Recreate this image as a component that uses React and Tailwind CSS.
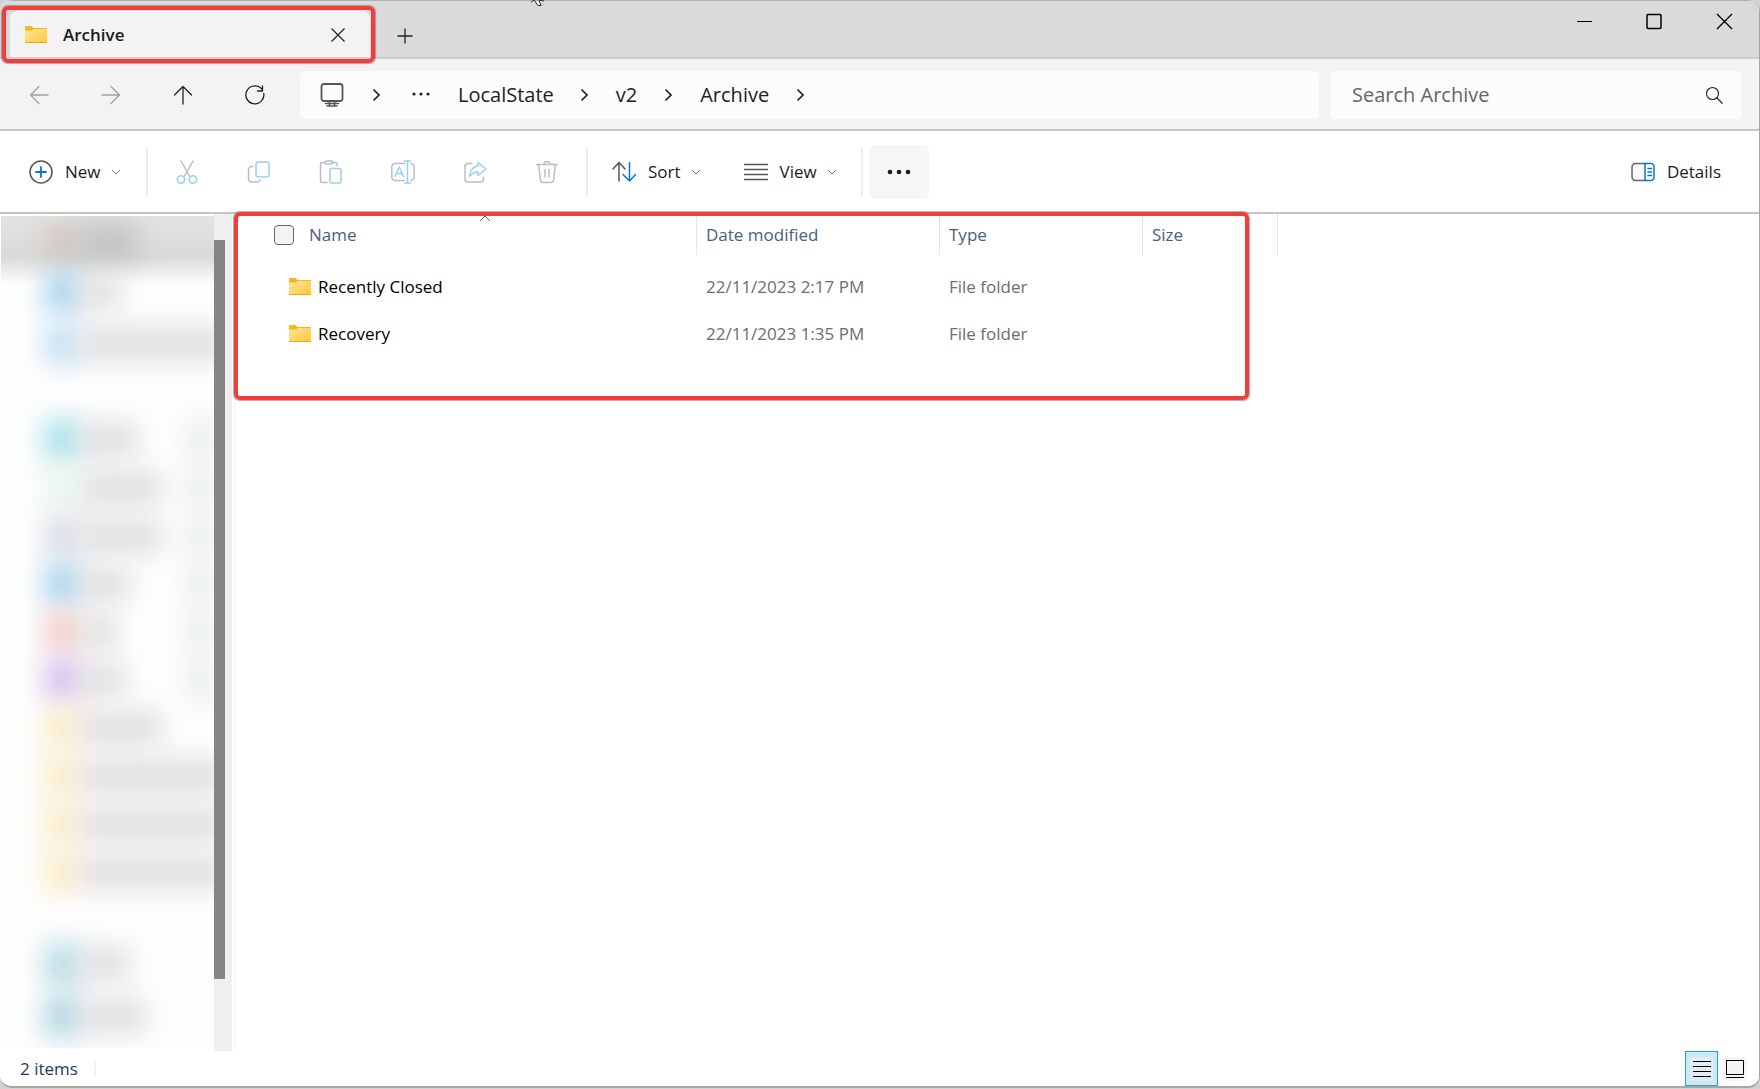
import React, { useState } from "react";

const Icon = ({ size = 24, className = "", children }) => (
  <svg
    width={size}
    height={size}
    viewBox="0 0 24 24"
    fill="none"
    stroke="currentColor"
    strokeWidth="1.5"
    strokeLinecap="round"
    strokeLinejoin="round"
    className={"shrink-0 " + className}
    aria-hidden="true"
  >
    {children}
  </svg>
);

const Folder = () => (
  <svg width="24" height="18" viewBox="0 0 24 18" className="shrink-0" aria-hidden="true">
    <defs>
      <linearGradient id="folder" x1="0" y1="0" x2="1" y2="1">
        <stop offset="0" stopColor="#ffe69c" />
        <stop offset="1" stopColor="#ffc736" />
      </linearGradient>
    </defs>
    <path d="M1 1.500C1 .7 1.400 0 2 0h5.500l2 2H23v5H1z" fill="#f5b81c" />
    <path d="M1 4.500h7L10 3h13v14H1z" fill="url(#folder)" />
    <path d="M1 16.500h22" stroke="#eba91c" />
  </svg>
);

const ChevronDown = () => (
  <svg width="10" height="6" viewBox="0 0 10 6" fill="none" stroke="#777" className="shrink-0" aria-hidden="true">
    <path d="M1 1l4 4 4-4" />
  </svg>
);

const ChevronRight = () => (
  <svg width="9" height="14" viewBox="0 0 9 14" fill="none" stroke="#222" strokeWidth="1.7" className="shrink-0" aria-hidden="true">
    <path d="M1.500 1.500L7 7l-5.500 5.500" />
  </svg>
);

const Divider = () => <div className="h-12 w-0.5 shrink-0 bg-[#ededed]" />;

const actions = [
  {
    name: "Cut",
    icon: (
      <>
        <path d="M6 1l9 16M18 1L9 17" stroke="#bdbdbd" />
        <circle cx="6" cy="19.500" r="3.700" stroke="#9dcdf0" />
        <circle cx="18" cy="19.500" r="3.700" stroke="#9dcdf0" />
      </>
    ),
  },
  {
    name: "Copy",
    icon: (
      <>
        <path d="M6 6.500H5A3.500 3.500 0 001.500 10v8.500A3.500 3.500 0 005 22h5a3.500 3.500 0 003.300-2.200" stroke="#bdbdbd" />
        <rect x="9" y="2" width="13" height="15" rx="2.500" stroke="#9dcdf0" />
      </>
    ),
  },
  {
    name: "Paste",
    icon: (
      <>
        <path d="M6 2.500H3A1.500 1.500 0 001.500 4v17A1.500 1.500 0 003 22.500h5M13 2.500h3.500A1.500 1.500 0 0118 4v2" stroke="#bdbdbd" />
        <rect x="6" y="1" width="8" height="3" rx="1.500" stroke="#bdbdbd" />
        <rect x="11" y="8.500" width="11" height="14.500" rx="1.500" stroke="#9dcdf0" />
      </>
    ),
  },
  {
    name: "Rename",
    icon: (
      <>
        <path d="M13.500 3.500H4A3.500 3.500 0 00.800 7v10A3.500 3.500 0 004 20.500h9.500M19.500 3.500A3.500 3.500 0 0123.200 7v10a3.500 3.500 0 01-3.700 3.500" stroke="#bdbdbd" />
        <path d="M13.500 1h6M13.500 23h6M16.500 1v22M4 16.500L8.200 7l4.200 9.500M5.500 13.500h5.500" stroke="#9dcdf0" />
      </>
    ),
  },
  {
    name: "Share",
    icon: (
      <>
        <path d="M9 3.500H5A3 3 0 002 6.500V19a3 3 0 003 3h12.500a3 3 0 003-3v-1.500" stroke="#bdbdbd" />
        <path d="M15 2.500l8 6.500-8 6.500V12c-4 0-6.500 1.500-8.500 4.500C7 10.500 10 6.500 15 6z" stroke="#9dcdf0" />
      </>
    ),
  },
  {
    name: "Delete",
    icon: (
      <g stroke="#bdbdbd">
        <path d="M1.500 4.500h21M9 4.500a3 3 0 016 0M3.500 4.500l2 16a2.500 2.500 0 002.500 2h8a2.500 2.500 0 002.500-2l2-16M10 9.500v7.500M14 9.500v7.500" />
      </g>
    ),
  },
];

const files = [
  { name: "Recently Closed", modified: "22/11/2023 2:17 PM", type: "File folder", size: "" },
  { name: "Recovery", modified: "22/11/2023 1:35 PM", type: "File folder", size: "" },
];

const pinned = [
  { color: "bg-[#a4dfea]", label: "w-14", pin: true },
  { color: "bg-[#e8f6f0]", label: "w-20", pin: true },
  { color: "bg-[#d8dde6]", label: "w-20", pin: true },
  { color: "bg-[#a9d2ee]", label: "w-12", pin: true },
  { color: "bg-[#f4cdca]", label: "w-9", pin: true },
  { color: "bg-[#d6bdee]", label: "w-11", pin: true },
  { color: "bg-[#fbedc8]", label: "w-20" },
  { color: "bg-[#fbedc8]", label: "w-36" },
  { color: "bg-[#fbedc8]", label: "w-36" },
  { color: "bg-[#fbedc8]", label: "w-36" },
];

const Place = ({ color, label, pin }) => (
  <li className="flex h-12 items-center pl-11">
    <div className={"h-10 w-9 shrink-0 blur-[13px] " + color} />
    <div className={"h-8 shrink-0 bg-[#dedede] blur-[13px] " + label} />
    {pin && <div className="ml-auto h-10 w-7 bg-[#e8efec] blur-[13px]" />}
  </li>
);

const Sidebar = () => (
  <aside className="flex w-[236px] shrink-0 border-r-2 border-[#f7f7f7]">
    <nav aria-label="Folders" className="mt-0.5 mb-[3px] ml-px w-[213px] overflow-hidden bg-[#fdfdfd]">
      <div className="-mb-4 flex h-[68px] items-start bg-gradient-to-b from-[#e3e3e3] via-[#dadada] via-60% to-[#fdfdfd] pt-2 pl-11">
        <div className="h-9 w-9 bg-[#d3c8bd] blur-[13px]" />
        <div className="h-9 w-14 bg-[#c2c2c2] blur-[13px]" />
      </div>
      <ul className="mb-12 flex flex-col gap-1">
        <Place color="bg-[#a9d2ee]" label="w-10" />
        <Place color="bg-[#c2dff5]" label="w-36" />
      </ul>
      <ul className="mb-11">
        {pinned.map((place, i) => (
          <Place key={i} {...place} />
        ))}
      </ul>
      <ul className="flex flex-col gap-1">
        <Place color="bg-[#b4dae5]" label="w-12" />
        <Place color="bg-[#aed4e1]" label="w-16" />
      </ul>
    </nav>
    <div className="flex w-[18px] flex-col bg-[#efefef] pt-[26px] pb-[72px]">
      <div className="w-[11px] flex-1 bg-[#858585]" />
    </div>
  </aside>
);

const TitleBar = () => (
  <header className="flex h-[59px] shrink-0 justify-between border-t border-b-2 border-t-[#b0b0b0] border-b-[#cecece] bg-[#dadada]">
    <div className="flex items-end pl-2.5">
      <div className="relative flex h-[46px] w-[360px] items-center rounded-t-lg bg-[#f3f3f3] pt-0.5 pr-6 pl-3.5">
        <Folder />
        <span className="ml-[15px] flex-1 text-[17px] font-semibold text-[#1b1b1b]">Archive</span>
        <button aria-label="Close tab">
          <svg width="16" height="16" viewBox="0 0 16 16" stroke="#222" strokeWidth="1.200">
            <path d="M1.500 1.500l13 13M14.500 1.500l-13 13" />
          </svg>
        </button>
        <div className="pointer-events-none absolute -top-[5px] -right-[5px] -bottom-1.5 -left-2 z-10 rounded-md border-4 border-[#f33c3c] shadow-[0_0_1px_1px_rgba(90,90,90,0.5)]" />
      </div>
      <button aria-label="New tab" className="mb-3 ml-[26px]">
        <svg width="18" height="18" viewBox="0 0 18 18" stroke="#222" strokeWidth="1.300">
          <path d="M9 1.500v15M1.500 9h15" />
        </svg>
      </button>
    </div>
    <div className="flex items-start gap-[53px] pt-3 pr-[26px]">
      <button aria-label="Minimize">
        <svg width="17" height="17" viewBox="0 0 17 17" stroke="#000">
          <path d="M1 8.500h15" />
        </svg>
      </button>
      <button aria-label="Maximize">
        <svg width="17" height="17" viewBox="0 0 17 17" fill="none" stroke="#000" strokeWidth="1.500">
          <rect x="1" y="1.500" width="14" height="14" rx="1" />
        </svg>
      </button>
      <button aria-label="Close">
        <svg width="17" height="17" viewBox="0 0 17 17" stroke="#000" strokeWidth="1.400">
          <path d="M1 1l15 15M16 1L1 16" />
        </svg>
      </button>
    </div>
  </header>
);

const AddressBar = () => (
  <div className="flex h-[72px] shrink-0 items-center border-b-2 border-[#c6c6c6] bg-[#f3f3f3] pt-0.5 pr-[17px] pl-[27px]">
    <div className="flex w-[273px] gap-12 text-[#222]">
      <button aria-label="Back" className="text-[#a0a0a0]">
        <Icon>
          <path strokeWidth="1.300" d="M21 12H3.500M12 3.500L3.500 12l8.500 8.500" />
        </Icon>
      </button>
      <button aria-label="Forward" className="text-[#a0a0a0]">
        <Icon>
          <path strokeWidth="1.300" d="M3 12h17.500M12 3.500l8.500 8.500-8.500 8.500" />
        </Icon>
      </button>
      <button aria-label="Up">
        <Icon>
          <path strokeWidth="1.300" d="M12 21V3.500M3.500 12L12 3.500l8.500 8.500" />
        </Icon>
      </button>
      <button aria-label="Refresh">
        <Icon>
          <path strokeWidth="1.300" d="M20.800 10.500A9 9 0 1119 6.300M19.500 3v5H14.500" />
        </Icon>
      </button>
    </div>
    <div className="flex h-12 flex-1 items-center rounded-md bg-[#fcfcfc] pl-5 text-[20px] text-[#222]">
      <button aria-label="This PC">
        <Icon className="text-[#555]">
          <rect x="1.500" y="1" width="21" height="17" rx="2.500" strokeWidth="1.800" />
          <path d="M9.500 18v4.500M14.500 18v4.500M5.500 20.500h13M7 23h10" />
        </Icon>
      </button>
      <div className="ml-7">
        <ChevronRight />
      </div>
      <button aria-label="More folders" className="ml-[30px]">
        <svg width="20" height="6" viewBox="0 0 20 6" fill="#222">
          <circle cx="3" cy="2" r="1.600" />
          <circle cx="10" cy="2" r="1.600" />
          <circle cx="17" cy="2" r="1.600" />
        </svg>
      </button>
      <a href="#localstate" className="ml-[27px]">LocalState</a>
      <div className="ml-[26px]">
        <ChevronRight />
      </div>
      <a href="#v2" className="ml-[27px]">v2</a>
      <div className="ml-[27px]">
        <ChevronRight />
      </div>
      <a href="#archive" className="ml-[27px]">Archive</a>
      <div className="ml-[27px]">
        <ChevronRight />
      </div>
    </div>
    <label className="ml-[11px] flex h-12 w-[412px] items-center rounded-md bg-[#fcfcfc] pr-[19px] pl-[22px]">
      <input
        type="text"
        aria-label="Search Archive"
        placeholder="Search Archive"
        className="min-w-0 flex-1 text-[20px] text-[#222] outline-none placeholder:text-[#666]"
      />
      <Icon size={18} className="text-[#222]">
        <circle cx="10" cy="10" r="8" />
        <path d="M16 16l7 7" />
      </Icon>
    </label>
  </div>
);

const Toolbar = () => (
  <div className="flex h-[83px] shrink-0 items-center border-b-2 border-[#c6c6c6] bg-white pr-[38px] pl-[29px] text-[17px] text-[#1b1b1b]">
    <button className="flex w-[117px] items-center">
      <Icon>
        <circle cx="12" cy="12" r="11" stroke="#555" />
        <path d="M12 7v10M7 12h10" stroke="#0078d4" strokeWidth="1.800" />
      </Icon>
      <span className="mr-2.5 ml-3">New</span>
      <ChevronDown />
    </button>
    <Divider />
    <div className="flex gap-6 px-[15px]">
      {actions.map(({ name, icon }) => (
        <button key={name} aria-label={name} className="flex h-12 w-12 items-center justify-center">
          <Icon>{icon}</Icon>
        </button>
      ))}
    </div>
    <Divider />
    <button className="ml-6 flex items-center">
      <Icon>
        <path d="M7 21V2.500M1 9l6-6.500L13 9" stroke="#555" />
        <path d="M17.500 2.500V21M11 14.500l6.500 6.500 6-6.500" stroke="#0078d4" />
      </Icon>
      <span className="mr-2.5 ml-3">Sort</span>
      <ChevronDown />
    </button>
    <button className="ml-[43px] flex items-center">
      <Icon className="text-[#555]">
        <path d="M0 4.500h24M0 9.500h24M0 14.500h24M0 19.500h24" strokeLinecap="butt" />
      </Icon>
      <span className="mr-2.5 ml-3">View</span>
      <ChevronDown />
    </button>
    <div className="ml-6 flex items-center gap-1.5">
      <Divider />
      <button aria-label="See more" className="flex h-[54px] w-[60px] items-center justify-center rounded-md bg-[#f6f6f6]">
        <svg width="26" height="6" viewBox="0 0 26 6" fill="#1b1b1b">
          <circle cx="4" cy="3" r="2.300" />
          <circle cx="13" cy="3" r="2.300" />
          <circle cx="22" cy="3" r="2.300" />
        </svg>
      </button>
    </div>
    <button className="ml-auto flex items-center gap-3">
      <Icon>
        <path d="M14 3.500H4.500A3.500 3.500 0 001 7v10a3.500 3.500 0 003.500 3.500H14" stroke="#666" fill="#f7f7f7" />
        <path d="M14 3.500h5.500A3.500 3.500 0 0123 7v10a3.500 3.500 0 01-3.500 3.500H14zM17 8.500h3.500M17 12h3.500M17 15.500h3.500" stroke="#0078d4" />
      </Icon>
      Details
    </button>
  </div>
);

const columns = [
  { name: "Date modified", width: "w-[243px]" },
  { name: "Type", width: "w-[203px]" },
  { name: "Size", width: "w-[135px]" },
];

const FileList = () => {
  const [all, setAll] = useState(false);

  return (
    <main className="relative flex-1 bg-white">
      <table className="w-[1042px] table-fixed text-left text-[17px]">
        <thead className="text-[#4c607a]">
          <tr>
            <th className="w-[461px] p-0 pb-2 font-normal">
              <div className="relative flex h-[41px] items-center border-r border-[#e5e5e5] pl-[38px]">
                <input
                  id="select-all"
                  type="checkbox"
                  aria-label="Select all"
                  checked={all}
                  onChange={() => setAll(!all)}
                  className="mr-[15px] h-5 w-5 appearance-none rounded border border-[#666] bg-[#f3f3f3] checked:bg-[#0078d4]"
                />
                Name
                <svg width="12" height="7" viewBox="0 0 12 7" fill="none" stroke="#666" className="absolute top-px left-[243px]">
                  <path d="M1 6l5-5 5 5" />
                </svg>
              </div>
            </th>
            {columns.map(({ name, width }) => (
              <th key={name} className={"p-0 pb-2 font-normal " + width}>
                <div className="flex h-[41px] items-center border-r border-[#e5e5e5] pl-[9px]">{name}</div>
              </th>
            ))}
          </tr>
        </thead>
        <tbody className="text-[#6d6d6d]">
          {files.map((file) => (
            <tr key={file.name} className="h-[47px]">
              <td className="p-0 pl-13 text-black">
                <div className="flex items-center gap-1.5">
                  <Folder />
                  {file.name}
                </div>
              </td>
              <td className="p-0 pl-[9px]">{file.modified}</td>
              <td className="p-0 pl-[9px]">{file.type}</td>
              <td className="p-0 pl-[9px]">{file.size}</td>
            </tr>
          ))}
        </tbody>
      </table>
      <div className="pointer-events-none absolute -top-0.5 -left-0.5 h-[188px] w-[1015px] rounded-md border-4 border-[#f33c3c] shadow-[0_0_1px_1px_rgba(90,90,90,0.5)]" />
    </main>
  );
};

const StatusBar = () => (
  <footer className="flex h-[35px] shrink-0 items-center bg-white pr-3 pl-5 text-[17px] text-[#1e395b]">
    <span>2 items</span>
    <div className="ml-4 h-[17px] w-0.5 bg-[#f3f3f3]" />
    <button aria-label="Details view" className="ml-auto flex h-[35px] w-[33px] items-center justify-center border border-[#26a0da] bg-[#cce8f6]">
      <svg width="24" height="24" viewBox="0 0 24 24" stroke="#000" className="rounded bg-[#e2edf2]">
        <path d="M3 4.500h18M3 9.500h18M3 14.500h18M3 19.500h18" />
      </svg>
    </button>
    <button aria-label="Large icons view" className="ml-[5px]">
      <svg width="24" height="24" viewBox="0 0 24 24" fill="none" stroke="#000" className="rounded bg-[#f5f5f5]">
        <rect x="3.500" y="3.500" width="17" height="14" />
        <path d="M3 20.500h18" />
      </svg>
    </button>
  </footer>
);

const App = () => (
  <div className="min-h-screen bg-[#d2d2d2] pb-px font-['Open_Sans','Noto_Sans',sans-serif]">
    <div className="relative flex min-h-[calc(100vh-1px)] flex-col overflow-hidden rounded-xl border-r border-b-2 border-[#a6a6a6] bg-white">
      <TitleBar />
      <AddressBar />
      <Toolbar />
      <div className="flex flex-1">
        <Sidebar />
        <FileList />
      </div>
      <StatusBar />
      <svg width="14" height="6" viewBox="0 0 14 6" fill="#fff" stroke="#222" className="absolute top-0 left-[531px]" aria-hidden="true">
        <path d="M0 2.500L3 0l4 5.500h3L8 0l5 1" />
      </svg>
    </div>
  </div>
);

export default App;
